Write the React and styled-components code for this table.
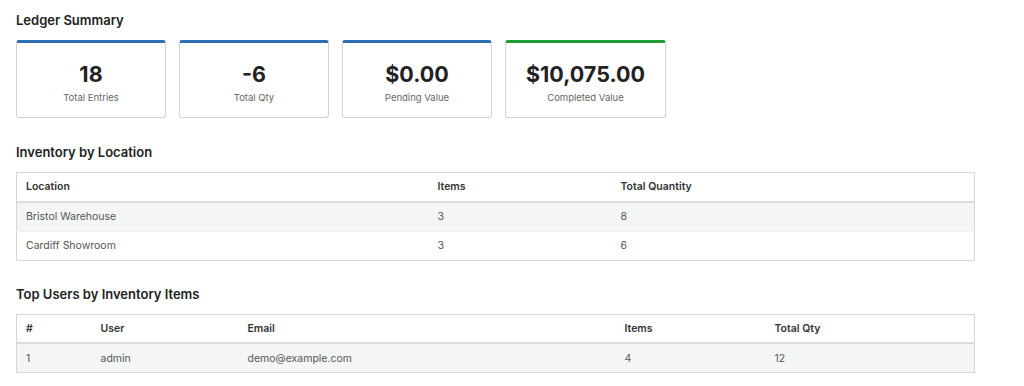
import React from 'react';
import styled, { createGlobalStyle } from 'styled-components';

const GlobalStyle = createGlobalStyle`
body {
    margin:0;
    background:#fff;
    font-family:"Inter", "Liberation Sans", sans-serif;
    color:#222;
}
`;

const Page = styled.div`
padding:11px 49px 12px 16px;
display:flex;
flex-direction:column;
`;

const SectionTitle = styled.h2`
margin:0 0 11px 0;
font-size:13px;
line-height:18px;
font-weight:600;
color:#222;
`;

const Cards = styled.div`
display:flex;
gap:13px;
margin-bottom:25px;
`;

const Card = styled.div`
min-width:150px;
box-sizing:border-box;
height:78px;
padding:0 20px;
border:1px solid #d2d2d2;
border-top:3px solid ${p => p.accent};
border-radius:3px;
display:flex;
flex-direction:column;
align-items:center;
justify-content:center;
`;

const CardValue = styled.div`
font-size:21.5px;
line-height:24px;
font-weight:700;
color:#222;
margin-top:5px;
`;

const CardLabel = styled.div`
font-size:9.5px;
line-height:12px;
color:#666;
margin-top:6px;
`;

const Table = styled.table`
width:959px;
border-collapse:collapse;
border:1px solid #d6d6d6;
margin-bottom:24px;
table-layout:fixed;
font-size:10.5px;
&:last-child{margin-bottom:0;}
`;

const Th = styled.th`
box-sizing:border-box;
text-align:left;
font-weight:600;
color:#333;
height:29px;
padding:0 9px;
border-bottom:2px solid #dcdcdc;
width:${p => p.w ? p.w + 'px' : 'auto'};
`;

const Tr = styled.tr`
background:${p => p.striped ? '#f4f5f5' : '#fff'};
`;

const Td = styled.td`
color:#555;
height:28px;
padding:0 9px;
border-top:1px solid #f0f0f0;
`;

const summary = [
    { value: '18', label: 'Total Entries', accent: '#2c6fb3' },
    { value: '-6', label: 'Total Qty', accent: '#2c6fb3' },
    { value: '$0.00', label: 'Pending Value', accent: '#2c6fb3' },
    { value: '$10,075.00', label: 'Completed Value', accent: '#1f9e38' },
];

const locations = [
    ['Bristol Warehouse', '3', '8'],
    ['Cardiff Showroom', '3', '6'],
];

const users = [
    ['1', 'admin', 'demo@example.com', '4', '12'],
];

const App = () => {
    return (
        <Page>
            <GlobalStyle />
            <SectionTitle>Ledger Summary</SectionTitle>
            <Cards>
                {summary.map(s => (
                    <Card key={s.label} accent={s.accent}>
                        <CardValue>{s.value}</CardValue>
                        <CardLabel>{s.label}</CardLabel>
                    </Card>
                ))}
            </Cards>

            <SectionTitle>Inventory by Location</SectionTitle>
            <Table>
                <thead>
                    <tr>
                        <Th w={412}>Location</Th>
                        <Th w={183}>Items</Th>
                        <Th>Total Quantity</Th>
                    </tr>
                </thead>
                <tbody>
                    {locations.map((r, i) => (
                        <Tr key={r[0]} striped={i % 2 === 0}>
                            {r.map((c, j) => <Td key={j}>{c}</Td>)}
                        </Tr>
                    ))}
                </tbody>
            </Table>

            <SectionTitle>Top Users by Inventory Items</SectionTitle>
            <Table>
                <thead>
                    <tr>
                        <Th w={75}>#</Th>
                        <Th w={147}>User</Th>
                        <Th w={377}>Email</Th>
                        <Th w={150}>Items</Th>
                        <Th>Total Qty</Th>
                    </tr>
                </thead>
                <tbody>
                    {users.map((r, i) => (
                        <Tr key={r[0]} striped={i % 2 === 0}>
                            {r.map((c, j) => <Td key={j}>{c}</Td>)}
                        </Tr>
                    ))}
                </tbody>
            </Table>
        </Page>
    );
}

export default App;
